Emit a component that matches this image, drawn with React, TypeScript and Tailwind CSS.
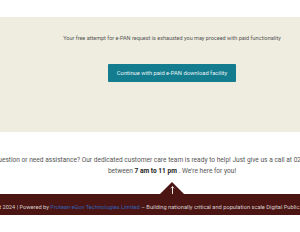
import React from 'react';

export default function App() {
    return (
        <div className="w-[300px] h-[232px] overflow-hidden bg-white font-['Roboto',_'Liberation_Sans',_sans-serif]">
            <div className="h-[17px] bg-white" />

            <section className="h-[115px] bg-[#efede0] pl-[44px]">
                <div className="flex flex-col items-center">
                    <p className="mt-[18px] text-[5.5px] leading-[6px] text-[#555555] whitespace-nowrap">
                        Your free attempt for e-PAN request is exhausted you may proceed with paid functionality
                    </p>
                    <button
                        type="button"
                        className="mt-[23px] h-[18px] w-[128px] rounded-[1px] bg-[#137c8f] text-[5.8px] text-[#e8f4f6] whitespace-nowrap"
                    >
                        Continue with paid e-PAN download facility
                    </button>
                </div>
            </section>

            <section className="h-[50px] pl-[44px] flex flex-col items-center pt-[23px] text-[6.6px] leading-[11px] text-[#555555]">
                <p className="whitespace-nowrap">
                    Have a question or need assistance? Our dedicated customer care team is ready to help! Just give us a call at 020 2721 8080 / 1800 180
                </p>
                <p className="whitespace-nowrap">
                    between <b className="text-[#222222]">7 am to 11 pm</b> . We're here for you!
                </p>
            </section>

            <footer className="relative mt-[12px] h-[21px] bg-[#4a1513] pl-[44px] flex items-end justify-center pb-[5px]">
                <div className="absolute left-[160px] top-[-12px] w-[24px] h-[12px] bg-[#4a1513] [clip-path:polygon(50%_0,100%_100%,0_100%)] flex justify-center">
                    <svg width="5" height="8" viewBox="0 0 5 8" className="mt-[4px]">
                        <path d="M2.5 0.5 L2.5 8" stroke="#ffffff" strokeWidth="0.9" />
                        <path d="M0.9 2.4 L2.5 0.6 L4.1 2.4" stroke="#ffffff" strokeWidth="0.8" fill="none" />
                    </svg>
                </div>
                <p className="text-[5.7px] leading-[6px] text-[#d9cfcd] whitespace-nowrap">
                    © Copyright 2024 | Powered by <span className="text-[#2f62b8]">Protean eGov Technologies Limited</span> – Building nationally critical and population scale Digital Public Infrastructure (DPI) for India.
                </p>
            </footer>
        </div>
    );
}
